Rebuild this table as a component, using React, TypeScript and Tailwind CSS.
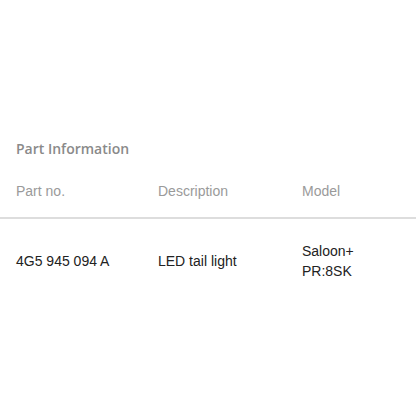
const rows = [
  { part: "4G5 945 094 A", desc: "LED tail light", model: ["Saloon+", "PR:8SK"] },
];

export default function App() {
  return (
    <div className="h-[416px] w-[416px] overflow-hidden bg-white">
      <div className="pt-[140px]">
        <h2
          className="pl-4 text-[14px] font-semibold leading-[18px] text-[#8a8a8a]"
          style={{ fontFamily: '"Open Sans", sans-serif' }}
        >
          Part Information
        </h2>
        <div style={{ fontFamily: '"Liberation Sans", Arial, sans-serif' }}>
          <div className="mt-[24px] grid grid-cols-[142px_144px_1fr] border-b-2 border-[#dddddd] pb-[17px] pl-4 text-[14px] leading-[18px] text-[#9a9a9a]">
            <div>Part no.</div>
            <div>Description</div>
            <div>Model</div>
          </div>
          {rows.map((r) => (
            <div
              key={r.part}
              className="grid grid-cols-[142px_144px_1fr] items-center pt-[22px] pl-4 text-[14px] leading-[20px] text-[#222222]"
            >
              <div>{r.part}</div>
              <div>{r.desc}</div>
              <div>
                {r.model.map((m) => (
                  <div key={m}>{m}</div>
                ))}
              </div>
            </div>
          ))}
        </div>
      </div>
    </div>
  );
}
